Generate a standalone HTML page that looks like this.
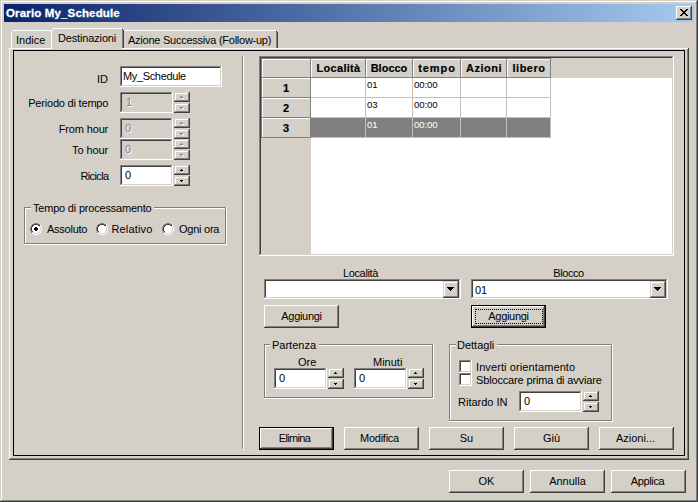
<!DOCTYPE html>
<html><head><meta charset="utf-8">
<style>
*{box-sizing:border-box;margin:0;padding:0}
html,body{width:698px;height:502px;overflow:hidden}
body{position:relative;background:#D4D0C8;font:11px "Liberation Sans",sans-serif;color:#000}
.a{position:absolute}
.t{position:absolute;line-height:13px;white-space:nowrap}
.r{text-align:right}
.c{text-align:center}
.sunk{position:absolute;box-shadow:inset -1px -1px #fff,inset 1px 1px #808080,inset -2px -2px #D4D0C8,inset 2px 2px #404040;background:#fff}
.sunk.dis{background:#D4D0C8}
.btn{position:absolute;box-shadow:inset -1px -1px #404040,inset 1px 1px #fff,inset -2px -2px #808080;background:#D4D0C8}
.drop{position:absolute;box-shadow:inset -1px -1px #404040,inset 1px 1px #D4D0C8,inset -2px -2px #808080,inset 2px 2px #fff;background:#D4D0C8}
.dbtn{position:absolute;border:1px solid #000;background:#D4D0C8}
.dbtn>i{position:absolute;left:0;top:0;right:0;bottom:0;box-shadow:inset -1px -1px #404040,inset 1px 1px #fff,inset -2px -2px #808080}
.spn{position:absolute;box-shadow:inset -1px -1px #404040,inset 1px 1px #D4D0C8,inset -2px -2px #808080,inset 2px 2px #fff;background:#D4D0C8}
.etch{position:absolute;box-shadow:inset -1px -1px #fff,inset 1px 1px #808080,inset -2px -2px #808080,inset 2px 2px #fff}
.up,.dn{position:absolute;width:1px;height:1px;background:#000}
.up{left:7px!important;top:4px!important;box-shadow:-1px 1px #000,0 1px #000,1px 1px #000}
.dn{left:6px!important;top:4px!important;box-shadow:1px 0 #000,2px 0 #000,1px 1px #000}
.spn.dis .up{background:#808080;box-shadow:-1px 1px #808080,0 1px #808080,1px 1px #808080,0 2px #fff,1px 2px #fff,2px 2px #fff}
.spn.dis .dn{background:#808080;box-shadow:1px 0 #808080,2px 0 #808080,1px 1px #808080,2px 1px #fff,3px 1px #fff,2px 2px #fff}
.bt{position:absolute;left:0;right:0;text-align:center;line-height:13px}
.gl{position:absolute;background:#808080}
.gw{position:absolute;background:#fff}
.hd{position:absolute;border-left:1px solid #fff;border-top:1px solid #fff;background:#D4D0C8;font-weight:bold;text-align:center;line-height:13px}
.cell{position:absolute;font-size:9.6px;line-height:12px;letter-spacing:-0.1px}
.radio{position:absolute;width:12px;height:12px;border-radius:50%;border:1px solid;border-color:#808080 #fff #fff #808080}
.radio>i{position:absolute;left:0;top:0;width:10px;height:10px;border-radius:50%;border:1px solid;border-color:#404040 #D4D0C8 #D4D0C8 #404040;background:#fff}
.radio>b{position:absolute;left:3px;top:3px;width:4px;height:4px;background:#000;border-radius:2px}
.cb{position:absolute;width:13px;height:13px;box-shadow:inset -1px -1px #fff,inset 1px 1px #808080,inset -2px -2px #D4D0C8,inset 2px 2px #404040;background:#fff}
</style></head><body>

<!-- window frame -->
<div class="a" style="left:0;top:0;width:698px;height:502px;box-shadow:inset -1px -1px #404040,inset 1px 1px #D4D0C8,inset -2px -2px #808080,inset 2px 2px #fff"></div>

<!-- title bar -->
<div class="a" style="left:4px;top:4px;width:690px;height:18px;background:linear-gradient(to right,#0A246A,#A6CAF0)"></div>
<div class="t" style="left:6px;top:7px;color:#fff;font-weight:bold;font-size:11.5px;letter-spacing:0.15px;-webkit-text-stroke:0.3px #fff">Orario My_Schedule</div>
<div class="btn" style="left:676px;top:6px;width:16px;height:14px">
  <svg class="a" style="left:4px;top:3px" width="8" height="7" viewBox="0 0 8 7" shape-rendering="crispEdges"><path d="M0 0h2v1h-2zM6 0h2v1h-2zM1 1h2v1h-2zM5 1h2v1h-2zM2 2h4v1h-4zM3 3h2v1h-2zM2 4h4v1h-4zM1 5h2v1h-2zM5 5h2v1h-2zM0 6h2v1h-2zM6 6h2v1h-2z" fill="#000"/></svg>
</div>

<!-- tab panel -->
<div class="a" style="left:9px;top:48px;width:680px;height:412px;box-shadow:inset -1px -1px #404040,inset 1px 1px #fff,inset -2px -2px #808080"></div>

<!-- tabs -->
<div class="a" style="left:13px;top:30px;width:38px;height:1px;background:#fff"></div>
<div class="a" style="left:12px;top:31px;width:1px;height:1px;background:#fff"></div>
<div class="a" style="left:11px;top:32px;width:1px;height:16px;background:#fff"></div>
<div class="t" style="left:16px;top:34px">Indice</div>
<div class="a" style="left:124px;top:30px;width:152px;height:1px;background:#fff"></div>
<div class="a" style="left:276px;top:31px;width:1px;height:1px;background:#404040"></div>
<div class="a" style="left:276px;top:32px;width:1px;height:16px;background:#808080"></div>
<div class="a" style="left:277px;top:32px;width:1px;height:16px;background:#404040"></div>
<div class="t" style="left:128px;top:34px;letter-spacing:-0.25px">Azione Successiva (Follow-up)</div>
<div class="a" style="left:52px;top:29px;width:70px;height:21px;background:#D4D0C8"></div>
<div class="a" style="left:53px;top:28px;width:69px;height:1px;background:#fff"></div>
<div class="a" style="left:52px;top:29px;width:1px;height:1px;background:#fff"></div>
<div class="a" style="left:51px;top:30px;width:1px;height:19px;background:#fff"></div>
<div class="a" style="left:122px;top:29px;width:1px;height:1px;background:#404040"></div>
<div class="a" style="left:122px;top:30px;width:1px;height:18px;background:#808080"></div>
<div class="a" style="left:123px;top:30px;width:1px;height:18px;background:#404040"></div>
<div class="t" style="left:58px;top:32px;letter-spacing:-0.15px">Destinazioni</div>

<!-- inner black frame -->
<div class="a" style="left:13px;top:50px;width:672px;height:406px;border:1px solid #000"></div>

<!-- separator -->
<div class="a" style="left:242px;top:56px;width:1px;height:393px;background:#808080"></div>
<div class="a" style="left:243px;top:56px;width:1px;height:394px;background:#fff"></div>
<div class="a" style="left:242px;top:449px;width:1px;height:1px;background:#fff"></div>

<!-- left labels -->
<div class="t r" style="left:8px;top:73px;width:100px">ID</div>
<div class="t r" style="left:8px;top:97px;width:100.2px;letter-spacing:-0.2px">Periodo di tempo</div>
<div class="t r" style="left:8px;top:123px;width:100.15px;letter-spacing:-0.15px">From hour</div>
<div class="t r" style="left:8px;top:144px;width:100.1px;letter-spacing:-0.1px">To hour</div>
<div class="t r" style="left:8px;top:170px;width:100.6px;letter-spacing:-0.6px">Ricicla</div>

<div class="sunk" style="left:120px;top:66px;width:102px;height:21px"></div>
<div class="t" style="left:123px;top:70px;letter-spacing:-0.35px">My_Schedule</div>

<div class="sunk dis" style="left:120px;top:92px;width:53px;height:21px"></div>
<div class="t" style="left:126px;top:96px;color:#808080;text-shadow:1px 1px #fff">1</div>
<div class="spn dis" style="left:174px;top:92px;width:16px;height:10px"><i class="up" style="left:5px;top:3px"></i></div>
<div class="spn dis" style="left:174px;top:103px;width:16px;height:10px"><i class="dn" style="left:5px;top:3px"></i></div>

<div class="sunk dis" style="left:120px;top:118px;width:53px;height:21px"></div>
<div class="t" style="left:125px;top:122px;color:#808080;text-shadow:1px 1px #fff">0</div>
<div class="spn dis" style="left:174px;top:118px;width:16px;height:10px"><i class="up" style="left:5px;top:3px"></i></div>
<div class="spn dis" style="left:174px;top:129px;width:16px;height:10px"><i class="dn" style="left:5px;top:3px"></i></div>

<div class="sunk dis" style="left:120px;top:139px;width:53px;height:21px"></div>
<div class="t" style="left:125px;top:143px;color:#808080;text-shadow:1px 1px #fff">0</div>
<div class="spn dis" style="left:174px;top:139px;width:16px;height:10px"><i class="up" style="left:5px;top:3px"></i></div>
<div class="spn dis" style="left:174px;top:150px;width:16px;height:10px"><i class="dn" style="left:5px;top:3px"></i></div>

<div class="sunk" style="left:120px;top:165px;width:53px;height:21px"></div>
<div class="t" style="left:125px;top:169px">0</div>
<div class="spn" style="left:174px;top:165px;width:16px;height:10px"><i class="up" style="left:5px;top:3px"></i></div>
<div class="spn" style="left:174px;top:176px;width:16px;height:10px"><i class="dn" style="left:5px;top:3px"></i></div>

<!-- Tempo di processamento group -->
<div class="etch" style="left:24px;top:207px;width:203px;height:38px"></div>
<div class="t" style="left:31px;top:202px;padding:0 2px;background:#D4D0C8;letter-spacing:-0.2px">Tempo di processamento</div>
<svg class="a" style="left:30px;top:223px" width="12" height="12" shape-rendering="crispEdges"><path fill="#808080" d="M4 0h4v1h-4zM2 1h2v1h-2zM8 1h2v1h-2zM1 2h1v1h-1zM1 3h1v1h-1zM0 4h1v1h-1zM0 5h1v1h-1zM0 6h1v1h-1zM0 7h1v1h-1zM1 8h1v1h-1zM1 9h1v1h-1z"/><path fill="#404040" d="M4 1h4v1h-4zM2 2h2v1h-2zM8 2h2v1h-2zM2 3h1v1h-1zM1 4h1v1h-1zM1 5h1v1h-1zM1 6h1v1h-1zM1 7h1v1h-1zM2 8h1v1h-1z"/><path fill="#fff" d="M4 2h4v1h-4zM10 2h1v1h-1zM3 3h6v1h-6zM10 3h1v1h-1zM2 4h8v1h-8zM11 4h1v1h-1zM2 5h8v1h-8zM11 5h1v1h-1zM2 6h8v1h-8zM11 6h1v1h-1zM2 7h8v1h-8zM11 7h1v1h-1zM3 8h6v1h-6zM10 8h1v1h-1zM4 9h4v1h-4zM10 9h1v1h-1zM2 10h2v1h-2zM8 10h2v1h-2zM4 11h4v1h-4z"/><path fill="#D4D0C8" d="M9 3h1v1h-1zM10 4h1v1h-1zM10 5h1v1h-1zM10 6h1v1h-1zM10 7h1v1h-1zM9 8h1v1h-1zM2 9h2v1h-2zM8 9h2v1h-2zM4 10h4v1h-4z"/><path fill="#000" d="M5 4h2v1h-2zM4 5h4v2h-4zM5 7h2v1h-2z"/></svg>
<div class="t" style="left:47px;top:223px;letter-spacing:-0.25px">Assoluto</div>
<svg class="a" style="left:96px;top:223px" width="12" height="12" shape-rendering="crispEdges"><path fill="#808080" d="M4 0h4v1h-4zM2 1h2v1h-2zM8 1h2v1h-2zM1 2h1v1h-1zM1 3h1v1h-1zM0 4h1v1h-1zM0 5h1v1h-1zM0 6h1v1h-1zM0 7h1v1h-1zM1 8h1v1h-1zM1 9h1v1h-1z"/><path fill="#404040" d="M4 1h4v1h-4zM2 2h2v1h-2zM8 2h2v1h-2zM2 3h1v1h-1zM1 4h1v1h-1zM1 5h1v1h-1zM1 6h1v1h-1zM1 7h1v1h-1zM2 8h1v1h-1z"/><path fill="#fff" d="M4 2h4v1h-4zM10 2h1v1h-1zM3 3h6v1h-6zM10 3h1v1h-1zM2 4h8v1h-8zM11 4h1v1h-1zM2 5h8v1h-8zM11 5h1v1h-1zM2 6h8v1h-8zM11 6h1v1h-1zM2 7h8v1h-8zM11 7h1v1h-1zM3 8h6v1h-6zM10 8h1v1h-1zM4 9h4v1h-4zM10 9h1v1h-1zM2 10h2v1h-2zM8 10h2v1h-2zM4 11h4v1h-4z"/><path fill="#D4D0C8" d="M9 3h1v1h-1zM10 4h1v1h-1zM10 5h1v1h-1zM10 6h1v1h-1zM10 7h1v1h-1zM9 8h1v1h-1zM2 9h2v1h-2zM8 9h2v1h-2zM4 10h4v1h-4z"/></svg>
<div class="t" style="left:111.5px;top:223px;letter-spacing:0.15px">Relativo</div>
<svg class="a" style="left:162px;top:223px" width="12" height="12" shape-rendering="crispEdges"><path fill="#808080" d="M4 0h4v1h-4zM2 1h2v1h-2zM8 1h2v1h-2zM1 2h1v1h-1zM1 3h1v1h-1zM0 4h1v1h-1zM0 5h1v1h-1zM0 6h1v1h-1zM0 7h1v1h-1zM1 8h1v1h-1zM1 9h1v1h-1z"/><path fill="#404040" d="M4 1h4v1h-4zM2 2h2v1h-2zM8 2h2v1h-2zM2 3h1v1h-1zM1 4h1v1h-1zM1 5h1v1h-1zM1 6h1v1h-1zM1 7h1v1h-1zM2 8h1v1h-1z"/><path fill="#fff" d="M4 2h4v1h-4zM10 2h1v1h-1zM3 3h6v1h-6zM10 3h1v1h-1zM2 4h8v1h-8zM11 4h1v1h-1zM2 5h8v1h-8zM11 5h1v1h-1zM2 6h8v1h-8zM11 6h1v1h-1zM2 7h8v1h-8zM11 7h1v1h-1zM3 8h6v1h-6zM10 8h1v1h-1zM4 9h4v1h-4zM10 9h1v1h-1zM2 10h2v1h-2zM8 10h2v1h-2zM4 11h4v1h-4z"/><path fill="#D4D0C8" d="M9 3h1v1h-1zM10 4h1v1h-1zM10 5h1v1h-1zM10 6h1v1h-1zM10 7h1v1h-1zM9 8h1v1h-1zM2 9h2v1h-2zM8 9h2v1h-2zM4 10h4v1h-4z"/></svg>
<div class="t" style="left:179px;top:223px;letter-spacing:-0.25px">Ogni ora</div>

<!-- grid -->
<div class="a" style="left:259px;top:56px;width:415px;height:200px;box-shadow:inset -1px -1px #fff,inset 1px 1px #808080,inset -2px -2px #D4D0C8,inset 2px 2px #404040;background:#fff"></div>
<div class="a" style="left:261px;top:58px;width:411px;height:20px;background:#D4D0C8"></div>
<div class="a" style="left:261px;top:58px;width:50px;height:196px;background:#D4D0C8"></div>

<div class="gl" style="left:261px;top:58px;width:290px;height:1px"></div>
<div class="gl" style="left:261px;top:77px;width:290px;height:1px"></div>
<div class="gl" style="left:261px;top:58px;width:1px;height:20px"></div>
<div class="gl" style="left:310px;top:58px;width:1px;height:20px"></div>
<div class="gl" style="left:365px;top:58px;width:1px;height:20px"></div>
<div class="gl" style="left:412px;top:58px;width:1px;height:20px"></div>
<div class="gl" style="left:460px;top:58px;width:1px;height:20px"></div>
<div class="gl" style="left:506px;top:58px;width:1px;height:20px"></div>
<div class="gl" style="left:550px;top:58px;width:1px;height:20px"></div>
<div class="gl" style="left:261px;top:58px;width:1px;height:80px"></div>
<div class="gl" style="left:310px;top:58px;width:1px;height:80px"></div>
<div class="gl" style="left:261px;top:97px;width:50px;height:1px"></div>
<div class="gl" style="left:261px;top:117px;width:50px;height:1px"></div>
<div class="gl" style="left:261px;top:137px;width:50px;height:1px"></div>
<div class="gw" style="left:262px;top:59px;width:48px;height:1px"></div>
<div class="gw" style="left:262px;top:59px;width:1px;height:18px"></div>
<div class="gw" style="left:311px;top:59px;width:54px;height:1px"></div>
<div class="gw" style="left:311px;top:59px;width:1px;height:18px"></div>
<div class="t c" style="left:311px;top:62px;width:54px;font-weight:bold;-webkit-text-stroke:0.2px #000;letter-spacing:0.3px;padding-left:1px">Località</div>
<div class="gw" style="left:366px;top:59px;width:46px;height:1px"></div>
<div class="gw" style="left:366px;top:59px;width:1px;height:18px"></div>
<div class="t c" style="left:366px;top:62px;width:46px;font-weight:bold;-webkit-text-stroke:0.2px #000">Blocco</div>
<div class="gw" style="left:413px;top:59px;width:47px;height:1px"></div>
<div class="gw" style="left:413px;top:59px;width:1px;height:18px"></div>
<div class="t c" style="left:413px;top:62px;width:47px;font-weight:bold;-webkit-text-stroke:0.2px #000;letter-spacing:0.9px;padding-left:1px">tempo</div>
<div class="gw" style="left:461px;top:59px;width:45px;height:1px"></div>
<div class="gw" style="left:461px;top:59px;width:1px;height:18px"></div>
<div class="t c" style="left:461px;top:62px;width:45px;font-weight:bold;-webkit-text-stroke:0.2px #000;letter-spacing:0.5px;padding-left:1px">Azioni</div>
<div class="gw" style="left:507px;top:59px;width:43px;height:1px"></div>
<div class="gw" style="left:507px;top:59px;width:1px;height:18px"></div>
<div class="t c" style="left:507px;top:62px;width:43px;font-weight:bold;-webkit-text-stroke:0.2px #000;letter-spacing:0.5px;padding-left:1px">libero</div>
<div class="gw" style="left:262px;top:78px;width:48px;height:1px"></div>
<div class="gw" style="left:262px;top:78px;width:1px;height:19px"></div>
<div class="t c" style="left:262px;top:82px;width:48px;font-weight:bold;-webkit-text-stroke:0.2px #000">1</div>
<div class="gw" style="left:262px;top:98px;width:48px;height:1px"></div>
<div class="gw" style="left:262px;top:98px;width:1px;height:19px"></div>
<div class="t c" style="left:262px;top:102px;width:48px;font-weight:bold;-webkit-text-stroke:0.2px #000">2</div>
<div class="gw" style="left:262px;top:118px;width:48px;height:1px"></div>
<div class="gw" style="left:262px;top:118px;width:1px;height:19px"></div>
<div class="t c" style="left:262px;top:122px;width:48px;font-weight:bold;-webkit-text-stroke:0.2px #000">3</div>
<div class="a" style="left:311px;top:118px;width:239px;height:19px;background:#808080"></div>
<div class="a" style="left:365px;top:78px;width:1px;height:60px;background:#C0C0C0"></div>
<div class="a" style="left:412px;top:78px;width:1px;height:60px;background:#C0C0C0"></div>
<div class="a" style="left:460px;top:78px;width:1px;height:60px;background:#C0C0C0"></div>
<div class="a" style="left:506px;top:78px;width:1px;height:60px;background:#C0C0C0"></div>
<div class="a" style="left:550px;top:78px;width:1px;height:60px;background:#C0C0C0"></div>
<div class="a" style="left:311px;top:97px;width:240px;height:1px;background:#C0C0C0"></div>
<div class="a" style="left:311px;top:117px;width:240px;height:1px;background:#C0C0C0"></div>
<div class="a" style="left:311px;top:137px;width:240px;height:1px;background:#C0C0C0"></div>
<div class="cell" style="left:367px;top:79px;color:#000">01</div>
<div class="cell" style="left:414px;top:79px;color:#000">00:00</div>
<div class="cell" style="left:367px;top:99px;color:#000">03</div>
<div class="cell" style="left:414px;top:99px;color:#000">00:00</div>
<div class="cell" style="left:367px;top:119px;color:#fff">01</div>
<div class="cell" style="left:414px;top:119px;color:#fff">00:00</div>
<!-- combos -->
<div class="t c" style="left:262px;top:267px;width:197px;letter-spacing:-0.35px">Località</div>
<div class="sunk" style="left:264px;top:279px;width:197px;height:20px"></div>
<div class="drop" style="left:443px;top:281px;width:16px;height:17px">
  <svg class="a" style="left:4px;top:6px" width="7" height="4" shape-rendering="crispEdges"><path d="M0 0h7v1h-7zM1 1h5v1h-5zM2 2h3v1h-3zM3 3h1v1h-1z" fill="#000"/></svg>
</div>
<div class="btn" style="left:264px;top:305px;width:75px;height:23px"><div class="bt" style="top:5px;letter-spacing:-0.3px">Aggiungi</div></div>

<div class="t c" style="left:470px;top:267px;width:197px;letter-spacing:-0.45px">Blocco</div>
<div class="sunk" style="left:471px;top:279px;width:197px;height:20px"></div>
<div class="t" style="left:475px;top:284px">01</div>
<div class="drop" style="left:650px;top:281px;width:16px;height:17px">
  <svg class="a" style="left:4px;top:6px" width="7" height="4" shape-rendering="crispEdges"><path d="M0 0h7v1h-7zM1 1h5v1h-5zM2 2h3v1h-3zM3 3h1v1h-1z" fill="#000"/></svg>
</div>
<div class="dbtn" style="left:471px;top:305px;width:75px;height:23px"><i></i>
  <div class="a" style="left:3px;top:3px;width:68px;height:15px;border:1px dotted #000"></div>
  <div class="bt" style="top:4px;letter-spacing:-0.3px">Aggiungi</div>
</div>

<!-- Partenza -->
<div class="etch" style="left:264px;top:344px;width:170px;height:55px"></div>
<div class="t" style="left:270px;top:339px;padding:0 3px 0 2px;background:#D4D0C8">Partenza</div>
<div class="t" style="left:298px;top:356px">Ore</div>
<div class="sunk" style="left:274px;top:368px;width:53px;height:21px"></div>
<div class="t" style="left:279px;top:372px">0</div>
<div class="spn" style="left:328px;top:368px;width:16px;height:10px"><i class="up" style="left:5px;top:3px"></i></div>
<div class="spn" style="left:328px;top:379px;width:16px;height:10px"><i class="dn" style="left:5px;top:3px"></i></div>
<div class="t" style="left:373px;top:356px">Minuti</div>
<div class="sunk" style="left:354px;top:368px;width:53px;height:21px"></div>
<div class="t" style="left:359px;top:372px">0</div>
<div class="spn" style="left:408px;top:368px;width:16px;height:10px"><i class="up" style="left:5px;top:3px"></i></div>
<div class="spn" style="left:408px;top:379px;width:16px;height:10px"><i class="dn" style="left:5px;top:3px"></i></div>

<!-- Dettagli -->
<div class="etch" style="left:449px;top:344px;width:164px;height:78px"></div>
<div class="t" style="left:456px;top:339px;padding:0 3px 0 1px;background:#D4D0C8">Dettagli</div>
<div class="cb" style="left:459px;top:360px"></div>
<div class="t" style="left:476px;top:361px;letter-spacing:0.1px">Inverti orientamento</div>
<div class="cb" style="left:459px;top:373px"></div>
<div class="t" style="left:476px;top:374px;letter-spacing:-0.15px">Sbloccare prima di avviare</div>
<div class="t" style="left:458px;top:396px">Ritardo IN</div>
<div class="sunk" style="left:519px;top:391px;width:63px;height:21px"></div>
<div class="t" style="left:524px;top:395px">0</div>
<div class="spn" style="left:583px;top:391px;width:16px;height:10px"><i class="up" style="left:5px;top:3px"></i></div>
<div class="spn" style="left:583px;top:402px;width:16px;height:10px"><i class="dn" style="left:5px;top:3px"></i></div>

<!-- bottom action buttons -->
<div class="dbtn" style="left:259px;top:427px;width:75px;height:23px"><i></i><div class="bt" style="top:4px;left:-2px;right:2px;letter-spacing:-0.65px">Elimina</div></div>
<div class="btn" style="left:344px;top:427px;width:75px;height:23px"><div class="bt" style="top:5px;left:-2px;right:2px;letter-spacing:-0.25px">Modifica</div></div>
<div class="btn" style="left:429px;top:427px;width:75px;height:23px"><div class="bt" style="top:5px">Su</div></div>
<div class="btn" style="left:514px;top:427px;width:75px;height:23px"><div class="bt" style="top:5px">Giù</div></div>
<div class="btn" style="left:599px;top:427px;width:75px;height:23px"><div class="bt" style="top:5px;left:-1px;right:1px">Azioni...</div></div>

<!-- dialog buttons -->
<div class="btn" style="left:449px;top:470px;width:75px;height:23px"><div class="bt" style="top:5px">OK</div></div>
<div class="btn" style="left:530px;top:470px;width:75px;height:23px"><div class="bt" style="top:5px">Annulla</div></div>
<div class="btn" style="left:611px;top:470px;width:75px;height:23px"><div class="bt" style="top:5px;left:-1px;right:1px;letter-spacing:-0.35px">Applica</div></div>
</body></html>
